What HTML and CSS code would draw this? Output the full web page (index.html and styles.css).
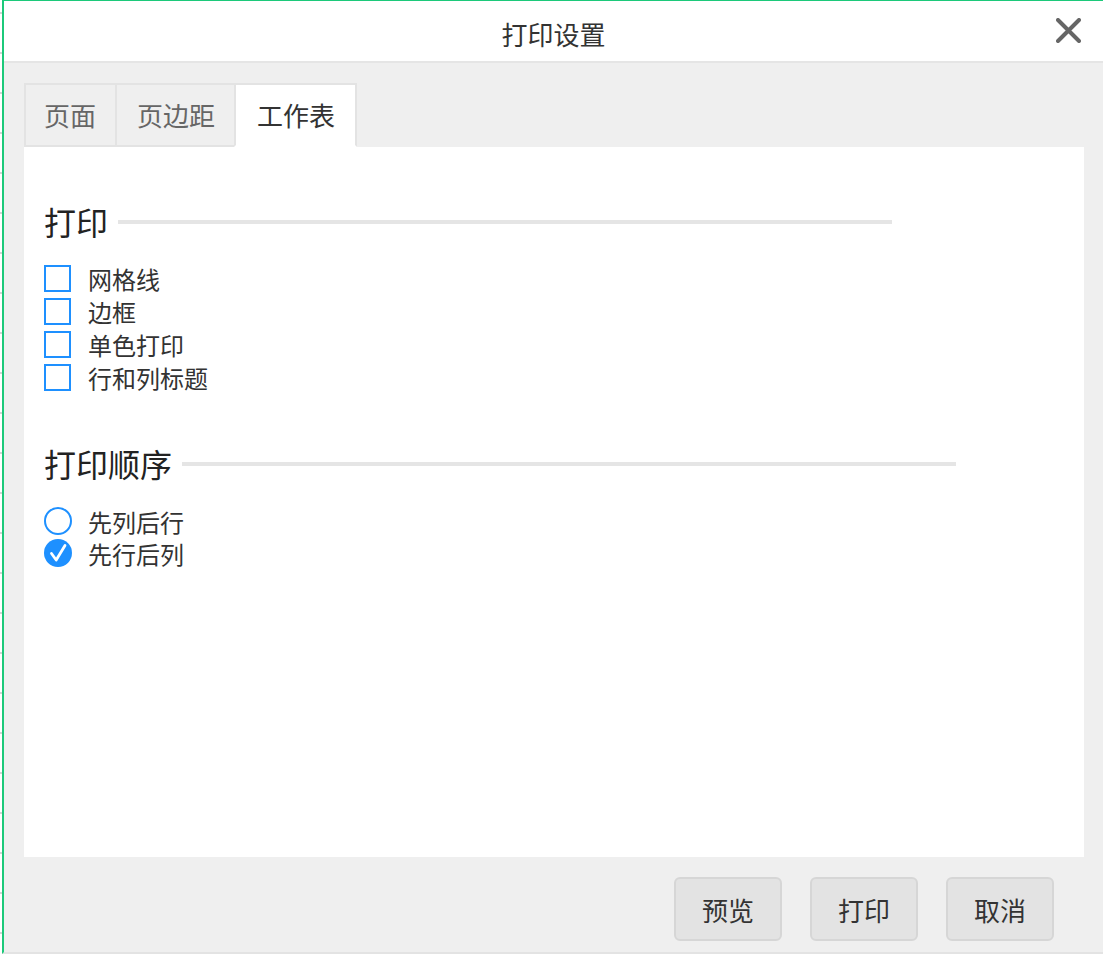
FILE: index.html
```html
<!DOCTYPE html>
<html lang="zh-CN">
<head>
<meta charset="utf-8">
<title>打印设置</title>
<link rel="stylesheet" href="styles.css">
</head>
<body>
<div class="page">
  <div class="sheet-edge"></div>
  <div class="dialog">
    <div class="titlebar">
      <span class="title">打印设置</span>
      <button class="close" aria-label="关闭">
        <svg width="25" height="25" viewBox="0 0 25 25"><path d="M2 2 L23 23 M23 2 L2 23" stroke="#666" stroke-width="4" stroke-linecap="round" fill="none"/></svg>
      </button>
    </div>
    <div class="body">
      <div class="tabs">
        <div class="tab">页面</div>
        <div class="tab">页边距</div>
        <div class="tab active">工作表</div>
      </div>
      <div class="panel">
        <div class="section-head"><span>打印</span><i class="rule"></i></div>
        <div class="options">
          <label class="opt"><span class="box"></span>网格线</label>
          <label class="opt"><span class="box"></span>边框</label>
          <label class="opt"><span class="box"></span>单色打印</label>
          <label class="opt"><span class="box"></span>行和列标题</label>
        </div>
        <div class="section-head second"><span>打印顺序</span><i class="rule"></i></div>
        <div class="options radios">
          <label class="opt radio"><span class="circle"></span>先列后行</label>
          <label class="opt radio"><span class="circle checked"><svg width="28" height="28" viewBox="0 0 28 28"><path d="M7.5 14.5 L12.2 21 L21 6.5" stroke="#fff" stroke-width="2.8" stroke-linecap="round" stroke-linejoin="round" fill="none"/></svg></span>先行后列</label>
        </div>
      </div>
      <div class="footer">
        <button class="btn">预览</button>
        <button class="btn">打印</button>
        <button class="btn">取消</button>
      </div>
    </div>
  </div>
</div>
</body>
</html>
```
FILE: styles.css
```css
* { box-sizing: border-box; }
html, body { margin: 0; padding: 0; background: #fff; }
body {
  font-family: "Noto Sans CJK SC", "Noto Sans", sans-serif;
  color: #333;
}
.page {
  display: flex;
  width: 1103px;
  height: 954px;
  overflow: hidden;
}
.sheet-edge {
  width: 2px;
  flex: none;
  background: repeating-linear-gradient(to bottom, transparent 0, transparent 12px, #d4d4d4 12px, #d4d4d4 14px, transparent 14px, transparent 40px);
}
.dialog {
  flex: 1;
  display: flex;
  flex-direction: column;
  border-left: 2px solid #1cc97a;
  border-top: 1px solid #1cc97a;
  border-bottom: 2px solid #e3e3e3;
  background: #efefef;
}
.titlebar {
  height: 62px;
  flex: none;
  background: #fff;
  border-bottom: 2px solid #e5e5e5;
  display: flex;
  align-items: center;
  justify-content: center;
  position: relative;
}
.title {
  font-size: 26px;
  color: #333;
  line-height: 1;
  padding-top: 5px;
}
.close {
  position: absolute;
  right: 22px;
  top: 17px;
  width: 25px;
  height: 25px;
  padding: 0;
  border: 0;
  background: none;
  display: block;
}
.close svg { display: block; }
.body {
  flex: 1;
  display: flex;
  flex-direction: column;
  padding: 20px 19px 0 20px;
}
.tabs {
  display: flex;
  height: 64px;
  flex: none;
}
.tab {
  border: 2px solid #e3e3e3;
  padding: 0 19px 0 18px;
  font-size: 26px;
  line-height: 60px;
  color: #666;
  background: #efefef;
}
.tab + .tab { margin-left: -2px; padding: 0 19px 0 20px; }
.tab.active {
  background: #fff;
  color: #333;
  border-bottom-color: #fff;
  padding: 0 20px 0 21px;
}
.panel {
  height: 710px;
  flex: none;
  background: #fff;
  padding: 52px 20px 0 20px;
}
.section-head {
  display: flex;
  align-items: center;
  height: 44px;
}
.section-head span {
  font-size: 32px;
  color: #222;
  line-height: 44px;
}
.section-head .rule {
  display: block;
  width: 774px;
  height: 4px;
  background: #e5e5e5;
  margin-left: 10px;
  margin-top: 2px;
}
.section-head.second { margin-top: 47px; }
.options {
  margin-top: 19px;
  display: flex;
  flex-direction: column;
}
.options.radios { margin-top: 20px; }
.opt {
  display: flex;
  align-items: center;
  height: 33px;
  font-size: 24px;
  color: #333;
}
.opt.radio { height: 32px; }
.box {
  width: 27px;
  height: 27px;
  border: 2px solid #1e90ff;
  margin-right: 17px;
  flex: none;
}
.circle {
  width: 28px;
  height: 28px;
  border: 2px solid #1e90ff;
  border-radius: 50%;
  margin-right: 16px;
  flex: none;
  position: relative;
}
.circle.checked {
  background: #1e90ff;
  border: 0;
}
.circle svg { display: block; }
.footer {
  display: flex;
  justify-content: flex-end;
  gap: 28px;
  padding: 20px 30px 0 0;
}
.btn {
  width: 108px;
  height: 64px;
  border: 2px solid #d6d6d6;
  border-radius: 6px;
  background: #e3e3e3;
  font-family: "Noto Sans CJK SC", "Noto Sans", sans-serif;
  font-size: 26px;
  color: #333;
  padding: 0;
}
```
